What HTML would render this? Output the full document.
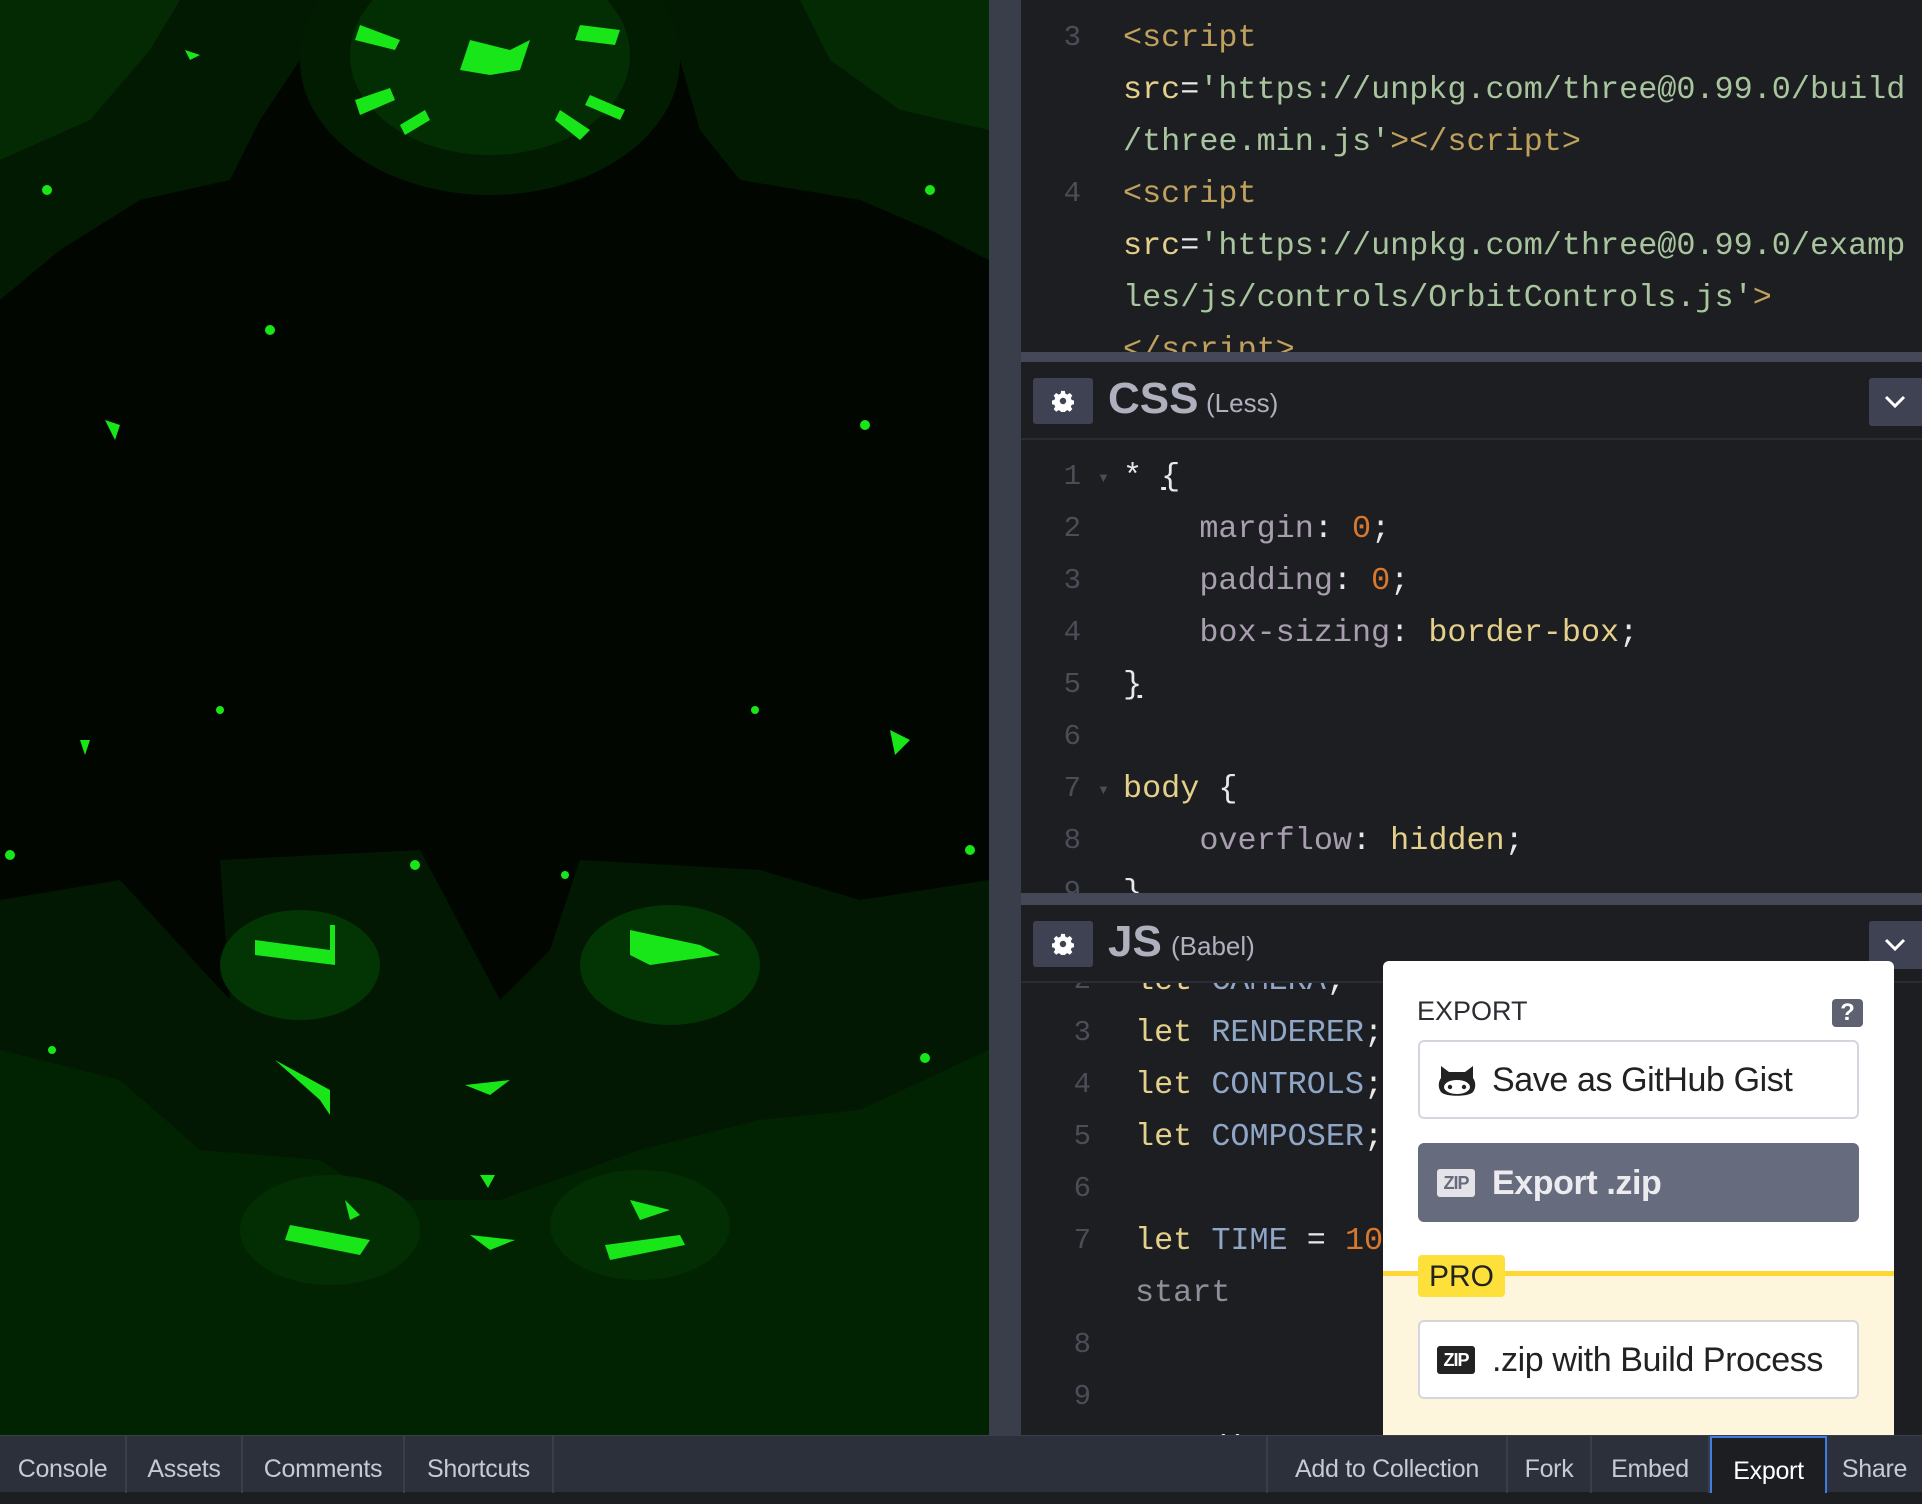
<!DOCTYPE html>
<html><head><meta charset="utf-8">
<style>
*{margin:0;padding:0;box-sizing:border-box}
body{width:1922px;height:1492px;overflow:hidden;background:#1d1e22;font-family:"Liberation Sans",sans-serif;position:relative}
.prev{position:absolute;left:0;top:0;width:989px;height:1435px;background:#010601;overflow:hidden}
.gut{position:absolute;left:989px;top:0;width:32px;height:1435px;background:#3a3d4a}
.pane{position:absolute;left:1021px;width:901px;background:#1d1e22;overflow:hidden}
.bar{position:absolute;left:1021px;width:901px;height:10px;background:#444857}
.code{position:absolute;font-family:"Liberation Mono",monospace;font-size:31.8px;line-height:52px;white-space:pre;color:#ccc}
.ln{position:absolute;font-family:"Liberation Mono",monospace;font-size:29px;line-height:52px;color:#4b4d57;text-align:right;width:60px}
.hd{position:absolute;left:0;width:901px;height:78px;border-bottom:2px solid #2a2c33}
.gear{position:absolute;left:12px;top:16px;width:60px;height:46px;background:#3f4252;border-radius:3px}
.gear svg{position:absolute;left:19px;top:12px}
.ttl{position:absolute;top:12px;font-size:44px;font-weight:bold;color:#aeb0be}
.sub{position:absolute;top:26px;font-size:26px;color:#aeb0be}
.chev{position:absolute;right:0;top:16px;width:53px;height:48px;background:#3f4252;border-radius:3px 0 0 3px}
.t{color:#bfa05c}.a{color:#e4d08a}.s{color:#a8c59e}.p{color:#a89eaf}.n{color:#d7782e}.y{color:#e4d08a}.v{color:#8fa6c6}.w{color:#e8e8e8}.g{color:#8d8f99}
.bb{position:absolute;left:0;top:1435px;width:1922px;height:57px;background:#2c303a;border-top:1px solid #3a3e4a}
.btn{position:absolute;top:0;height:57px;color:#c7c9d3;font-size:25px;letter-spacing:-0.3px;line-height:66px;text-align:center;border-right:2px solid #3a3e4a}
.pop{position:absolute;left:1383px;top:961px;width:511px;height:478px;background:#fff;border-radius:6px 6px 0 0;overflow:hidden}
.pb{position:absolute;left:35px;width:441px;height:79px;border:2px solid #d5d5de;border-radius:6px;background:#fff;font-size:34px;letter-spacing:-0.4px;color:#222;line-height:77px;padding-left:72px}
</style></head><body>

<div class="prev">
<svg width="989" height="1435" viewBox="0 0 989 1435">
<path d="M0 0H330L300 60 260 120 230 180 140 200 60 250 0 300Z" fill="#021a02"/>
<path d="M989 0H660L680 60 700 130 740 180 860 200 930 230 989 260Z" fill="#021a02"/>
<path d="M0 0H180L150 50 90 120 0 160Z" fill="#032a03"/>
<path d="M989 0H800L830 60 900 110 989 130Z" fill="#032a03"/>
<ellipse cx="490" cy="60" rx="190" ry="135" fill="#021c02"/>
<ellipse cx="490" cy="55" rx="140" ry="100" fill="#032e03"/>
<path d="M0 900L120 880 230 1000 220 860 420 850 500 1000 550 950 580 860 760 870 860 900 989 880V1435H0Z" fill="#021802"/>
<path d="M0 1050L120 1080 200 1150 320 1160 380 1200 500 1200 640 1150 760 1120 860 1110 989 1050V1435H0Z" fill="#022302"/>
<ellipse cx="300" cy="965" rx="80" ry="55" fill="#033403"/>
<ellipse cx="670" cy="965" rx="90" ry="60" fill="#033403"/>
<ellipse cx="330" cy="1230" rx="90" ry="55" fill="#032e03"/>
<ellipse cx="640" cy="1225" rx="90" ry="55" fill="#032e03"/>
<g fill="#19e619">
<path d="M470 40L510 50 530 40 520 70 490 75 460 70Z"/>
<path d="M360 25L400 40 395 50 355 40Z"/><path d="M580 25L620 30 615 45 575 40Z"/>
<path d="M355 100L390 88 395 100 360 115Z"/><path d="M400 125L425 110 430 120 405 135Z"/>
<path d="M560 110L590 130 580 140 555 120Z"/><path d="M590 95L625 110 620 120 585 105Z"/>
<path d="M255 940L330 950 330 925 335 925 335 965 255 955Z"/>
<path d="M630 930L700 945 720 955 650 965 630 955Z"/>
<path d="M275 1060L330 1090 330 1115 320 1100Z"/>
<path d="M290 1225L370 1240 360 1255 285 1240Z"/><path d="M605 1245L680 1235 685 1245 610 1260Z"/>
<path d="M465 1085L510 1080 490 1095Z"/><path d="M470 1235L515 1240 490 1250Z"/>
<path d="M480 1175L495 1175 488 1188Z"/><path d="M345 1200L360 1215 350 1220Z"/>
<path d="M630 1200L670 1210 640 1220Z"/>
<path d="M890 730L910 740 895 755Z"/><path d="M105 420L120 425 115 440Z"/>
<path d="M80 740L90 740 85 755Z"/><path d="M185 50L200 55 190 60Z"/>
<circle cx="47" cy="190" r="5"/><circle cx="930" cy="190" r="5"/><circle cx="270" cy="330" r="5"/><circle cx="865" cy="425" r="5"/><circle cx="220" cy="710" r="4"/><circle cx="755" cy="710" r="4"/><circle cx="10" cy="855" r="5"/><circle cx="970" cy="850" r="5"/><circle cx="415" cy="865" r="5"/><circle cx="565" cy="875" r="4"/><circle cx="52" cy="1050" r="4"/><circle cx="925" cy="1058" r="5"/>
</g>
</svg>
</div>
<div class="gut"></div>

<!-- HTML pane -->
<div class="pane" style="top:0;height:352px">
<div class="ln" style="left:0;top:12px">3<br><br><br>4</div>
<div class="code" style="left:102px;top:12px"><span class="t">&lt;script</span>
<span class="a">src</span><span class="w">=</span><span class="s">'https://unpkg.com/three@0.99.0/build</span>
<span class="s">/three.min.js'</span><span class="t">&gt;&lt;/script&gt;</span>
<span class="t">&lt;script</span>
<span class="a">src</span><span class="w">=</span><span class="s">'https://unpkg.com/three@0.99.0/examp</span>
<span class="s">les/js/controls/OrbitControls.js'</span><span class="t">&gt;</span>
<span class="t">&lt;/script&gt;</span></div>
</div>
<div class="bar" style="top:352px"></div>

<!-- CSS pane -->
<div class="pane" style="top:362px;height:531px">
<div class="hd" style="top:0">
<div class="gear"><svg width="22" height="22" viewBox="0 0 24 24"><path fill="#fff" d="M10 1h4l.6 3 2.2 1 2.6-1.7 2.8 2.8-1.7 2.6 1 2.2 3 .6v4l-3 .6-1 2.2 1.7 2.6-2.8 2.8-2.6-1.7-2.2 1-.6 3h-4l-.6-3-2.2-1-2.6 1.7-2.8-2.8 1.7-2.6-1-2.2-3-.6v-4l3-.6 1-2.2-1.7-2.6 2.8-2.8 2.6 1.7 2.2-1zM12 8.5a3.5 3.5 0 100 7 3.5 3.5 0 000-7z"/></svg></div>
<div class="ttl" style="left:87px">CSS</div><div class="sub" style="left:185px">(Less)</div>
<div class="chev"><svg width="53" height="48"><path d="M17 19l9 9 9-9" stroke="#fff" stroke-width="3" fill="none"/></svg></div>
</div>
<div class="ln" style="left:0;top:89px">1<br>2<br>3<br>4<br>5<br>6<br>7<br>8<br>9</div>
<div class="code" style="left:102px;top:89px"><span class="w">* <u>{</u></span>
    <span class="p">margin</span><span class="w">: </span><span class="n">0</span><span class="w">;</span>
    <span class="p">padding</span><span class="w">: </span><span class="n">0</span><span class="w">;</span>
    <span class="p">box-sizing</span><span class="w">: </span><span class="y">border-box</span><span class="w">;</span>
<span class="w"><u>}</u></span>

<span class="y">body</span><span class="w"> {</span>
    <span class="p">overflow</span><span class="w">: </span><span class="y">hidden</span><span class="w">;</span>
<span class="w">}</span></div>
<div style="position:absolute;left:76px;top:108px;color:#4b4d57;font-size:13px">▼</div>
<div style="position:absolute;left:76px;top:420px;color:#4b4d57;font-size:13px">▼</div>
</div>
<div class="bar" style="top:893px;height:12px"></div>

<!-- JS pane -->
<div class="pane" style="top:905px;height:530px">
<div class="ln" style="left:10px;top:50px;color:#4b4d57">2<br>3<br>4<br>5<br>6<br>7<br><br>8<br>9</div>
<div class="code" style="left:114px;top:50px"><span class="y">let</span> <span class="v">CAMERA</span><span class="w">;</span>
<span class="y">let</span> <span class="v">RENDERER</span><span class="w">;</span>
<span class="y">let</span> <span class="v">CONTROLS</span><span class="w">;</span>
<span class="y">let</span> <span class="v">COMPOSER</span><span class="w">;</span>

<span class="y">let</span> <span class="v">TIME</span> <span class="w">=</span> <span class="n">10</span>
<span class="g">start</span>


<span class="w">  st()</span></div>
<div class="hd" style="top:0;background:#1d1e22">
<div class="gear"><svg width="22" height="22" viewBox="0 0 24 24"><path fill="#fff" d="M10 1h4l.6 3 2.2 1 2.6-1.7 2.8 2.8-1.7 2.6 1 2.2 3 .6v4l-3 .6-1 2.2 1.7 2.6-2.8 2.8-2.6-1.7-2.2 1-.6 3h-4l-.6-3-2.2-1-2.6 1.7-2.8-2.8 1.7-2.6-1-2.2-3-.6v-4l3-.6 1-2.2-1.7-2.6 2.8-2.8 2.6 1.7 2.2-1zM12 8.5a3.5 3.5 0 100 7 3.5 3.5 0 000-7z"/></svg></div>
<div class="ttl" style="left:87px">JS</div><div class="sub" style="left:150px">(Babel)</div>
<div class="chev"><svg width="53" height="48"><path d="M17 19l9 9 9-9" stroke="#fff" stroke-width="3" fill="none"/></svg></div>
</div>
</div>

<!-- Popup -->
<div class="pop">
<div style="position:absolute;left:34px;top:35px;font-size:27px;color:#2c2c33">EXPORT</div>
<div style="position:absolute;left:449px;top:38px;width:31px;height:28px;background:#5e6170;border-radius:4px;color:#fff;font-weight:bold;font-size:24px;text-align:center;line-height:28px">?</div>
<div class="pb" style="top:79px">
<svg style="position:absolute;left:18px;top:22px" width="38" height="34" viewBox="0 0 38 34"><path d="M3 2l8 6h16l8-6v12c3 4 3 10 0 14-4 5-28 5-32 0-3-4-3-10 0-14z" fill="#222"/><ellipse cx="19" cy="23" rx="13" ry="7" fill="#fff"/><circle cx="12" cy="23" r="2.2" fill="#222"/><circle cx="26" cy="23" r="2.2" fill="#222"/></svg>
Save as GitHub Gist</div>
<div class="pb" style="top:182px;background:#676b7e;border-color:#676b7e;color:#ececf0;font-weight:bold">
<div style="position:absolute;left:17px;top:24px;width:38px;height:28px;background:#e4e4e8;border-radius:3px;color:#676b7e;font-size:18px;font-weight:bold;line-height:28px;text-align:center;letter-spacing:-1px">ZIP</div>
Export .zip</div>
<div style="position:absolute;left:0;top:310px;width:511px;height:170px;background:#fef6dc;border-top:5px solid #fdd835"></div>
<div style="position:absolute;left:35px;top:294px;width:87px;height:42px;background:#fde03a;border-radius:4px;font-size:30px;color:#222;line-height:44px;text-align:center">PRO</div>
<div class="pb" style="top:359px">
<div style="position:absolute;left:17px;top:24px;width:38px;height:28px;background:#222;border-radius:3px;color:#fff;font-size:18px;font-weight:bold;line-height:28px;text-align:center;letter-spacing:-1px">ZIP</div>
.zip with Build Process</div>
</div>

<!-- bottom bar -->
<div class="bb">
<div class="btn" style="left:0;width:127px">Console</div>
<div class="btn" style="left:127px;width:116px">Assets</div>
<div class="btn" style="left:243px;width:162px">Comments</div>
<div class="btn" style="left:405px;width:149px">Shortcuts</div>
<div class="btn" style="left:1266px;width:242px;border-left:2px solid #3a3e4a">Add to Collection</div>
<div class="btn" style="left:1508px;width:84px">Fork</div>
<div class="btn" style="left:1592px;width:118px">Embed</div>
<div class="btn" style="left:1710px;width:117px;background:#1d1e22;color:#fff;border:2px solid #3f7ee0;border-bottom:none">Export</div>
<div class="btn" style="left:1827px;width:95px;border:none">Share</div>
</div>
</body></html>
